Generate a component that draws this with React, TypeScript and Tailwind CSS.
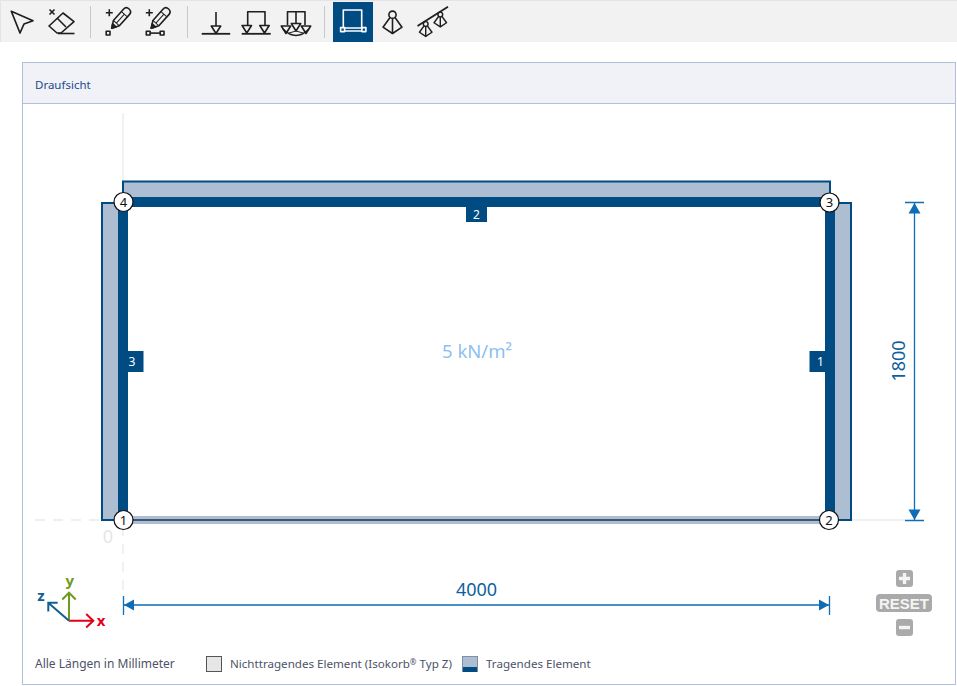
import React from "react";

const INK = "#1f1f1f";
const BLUE = "#004b82";
const SLAB = "#adbdd2";
const DIM = "#0f6cb5";
const GRID = "#ececec";

function Btn({ x, active, children }: { x: number; active?: boolean; children: React.ReactNode }) {
  return (
    <div className={active ? "w-10 h-10 shrink-0 bg-[#004b82]" : "w-10 h-10 shrink-0"}>
      <svg
        width={40}
        height={40}
        viewBox={`${x} 2 40 40`}
        fill="none"
        stroke={active ? "#ffffff" : INK}
        strokeWidth={1.6}
        strokeLinejoin="round"
      >
        {children}
      </svg>
    </div>
  );
}

function Pencil({ x, y }: { x: number; y: number }) {
  return (
    <g transform={`translate(${x} ${y}) rotate(-48)`}>
      <path d="M0 0 L7 -4 L22 -4 Q26 -4 26 0 Q26 4 22 4 L7 4 Z" />
      <path d="M0 0 L4 -2.3 L4 2.3 Z" fill={INK} />
      <path d="M7 -4 L7 4 M19 -4 L19 4 M7 0 L19 0" strokeWidth={1} />
    </g>
  );
}

function Plus({ x, y }: { x: number; y: number }) {
  return <path d={`M${x - 3.5} ${y} H${x + 3.5} M${x} ${y - 3.5} V${y + 3.5}`} strokeWidth={1.6} />;
}

function Tri({ x, y }: { x: number; y: number }) {
  return <path d={`M${x - 4.7} ${y} H${x + 4.7} L${x} ${y + 7.5} Z`} />;
}

function Support({ x, y, scale = 1, sw = 1.6 }: { x: number; y: number; scale?: number; sw?: number }) {
  return (
    <g transform={`translate(${x} ${y}) scale(${scale})`} strokeWidth={sw}>
      <circle cx={0} cy={0} r={3.6} />
      <path d="M-2.5 2.8 L-9.5 12.5 L0 18.8 L9.5 12.5 L2.5 2.8" />
      <path d="M0 3.6 V18.8" />
    </g>
  );
}

function Sep({ className }: { className: string }) {
  return <div className={`w-px h-8 mt-1 shrink-0 bg-[#c8c8c8] ${className}`} />;
}

function Toolbar() {
  return (
    <div className="h-[42px] flex items-start pl-px pt-px bg-[#f2f2f2] border-t border-l border-[#e4e4e4] box-border">
      <Btn x={2}>
        <path d="M11.3 11.3 L33 20.7 L24 24 L20 33 Z" strokeWidth={1.7} />
      </Btn>
      <Btn x={42}>
        <path d="M49.5 9.5 L54.5 14.5 M54.5 9.5 L49.5 14.5" strokeWidth={1.6} />
        <path d="M63 13 L74 21.6 L61 33 L57 33 L49 26 Z" />
        <path d="M57 18 L66 27" />
        <path d="M58 33.5 H74.5" />
      </Btn>
      <Sep className="ml-2 mr-[9px]" />
      <Btn x={100}>
        <Plus x={109.3} y={12.7} />
        <Pencil x={111.7} y={28.3} />
        <rect x={106.2} y={31.2} width={3.8} height={3.8} />
      </Btn>
      <Btn x={140}>
        <Plus x={149.3} y={12.7} />
        <Pencil x={151.2} y={28.3} />
        <rect x={146.3} y={31.2} width={3.8} height={3.8} />
        <rect x={160.2} y={31.2} width={3.8} height={3.8} />
        <path d="M150.1 33.1 H160.2" />
      </Btn>
      <Sep className="ml-[7px] mr-[7px]" />
      <Btn x={195}>
        <path d="M216 12 V26" />
        <Tri x={216} y={26} />
        <path d="M201.7 33.8 H230.2" strokeWidth={1.8} />
      </Btn>
      <Btn x={235}>
        <path d="M247.7 25 V11.7 H265 V25" />
        <Tri x={246.8} y={25.5} />
        <Tri x={264.5} y={25.5} />
        <path d="M241.7 33.8 H270.7" strokeWidth={1.8} />
      </Btn>
      <Btn x={275}>
        <path d="M287.5 25 V11.7 H305 V25 M296 11.7 V23" />
        <Tri x={286} y={26} />
        <Tri x={296} y={23.5} />
        <Tri x={306} y={26} />
        <path d="M283 29 Q296 42 309 29" />
        <path d="M289 33 L296 31 L303 33" strokeWidth={1} />
      </Btn>
      <Sep className="ml-[9px] mr-2" />
      <Btn x={333} active>
        <path d="M343.3 28 V10 H361.7 V28" />
        <path d="M344.5 28 H362 M344.5 31 H362" strokeWidth={1.3} />
        <rect x={340.6} y={27.6} width={4} height={4} />
        <rect x={361.9} y={27.6} width={4} height={4} />
      </Btn>
      <Btn x={373}>
        <Support x={392.5} y={14.7} />
      </Btn>
      <Btn x={413}>
        <path d="M417.5 26 L448 6.7" strokeWidth={1.8} />
        <Support x={425.7} y={24} scale={0.66} sw={2.2} />
        <Support x={440.3} y={14.5} scale={0.66} sw={2.2} />
      </Btn>
    </div>
  );
}

function NodeMark({ x, y, n }: { x: number; y: number; n: number }) {
  return (
    <g>
      <circle cx={x} cy={y} r={9.5} fill="#ffffff" stroke="#111111" strokeWidth={1.2} />
      <text x={x} y={y + 4.6} textAnchor="middle" fontSize={13} fill="#111111">
        {n}
      </text>
    </g>
  );
}

function Tag({ x, y, w, h, n, tx }: { x: number; y: number; w: number; h: number; n: number; tx: number }) {
  return (
    <g>
      <rect x={x} y={y} width={w} height={h} fill={BLUE} />
      <text x={tx} y={y + h / 2 + 4.5} textAnchor="middle" fontSize={12} fill="#ffffff">
        {n}
      </text>
    </g>
  );
}

function Drawing() {
  return (
    <svg width={932} height={540} viewBox="23 104 932 540" className="block shrink-0">
      <path d="M123 113 V181" stroke={GRID} strokeWidth={1.5} />
      <path d="M35 520 H101" stroke={GRID} strokeWidth={1.5} strokeDasharray="10 8" />
      <path d="M123 526 V590" stroke={GRID} strokeWidth={1.5} strokeDasharray="10 8" />
      <path d="M852 520 H905" stroke={GRID} strokeWidth={1.5} />
      <text x={108} y={543} textAnchor="middle" fontSize={18} fill="#e6e6e6">
        0
      </text>

      <rect x={123} y={181.5} width={707} height={20} fill={SLAB} stroke={BLUE} strokeWidth={2} />
      <rect x={102} y={203} width={20} height={317} fill={SLAB} stroke={BLUE} strokeWidth={2} />
      <rect x={831} y={203} width={20} height={317} fill={SLAB} stroke={BLUE} strokeWidth={2} />
      <rect x={123} y={516} width={707} height={8} fill={SLAB} />
      <rect x={123} y={519} width={707} height={2} fill="#3d5671" />
      <rect x={118} y={197} width={717} height={10} fill={BLUE} />
      <rect x={118} y={197} width={10} height={323} fill={BLUE} />
      <rect x={825} y={197} width={10} height={323} fill={BLUE} />

      <Tag x={466} y={206} w={21} h={16} n={2} tx={476.5} />
      <Tag x={125} y={351} w={18.5} h={21} n={3} tx={132} />
      <Tag x={809.5} y={351} w={18} h={21} n={1} tx={820.5} />

      <NodeMark x={123.5} y={202} n={4} />
      <NodeMark x={829.5} y={202.5} n={3} />
      <NodeMark x={123.5} y={520} n={1} />
      <NodeMark x={829} y={520} n={2} />

      <text x={477} y={358} textAnchor="middle" fontSize={18.5} fill="#8dbff0">
        5 kN/m²
      </text>

      <path d="M123.5 596 V615 M829.5 596 V615 M123.5 605 H829.5" stroke={DIM} strokeWidth={1.3} />
      <path d="M124 605 L134 599.5 V610.5 Z M829 605 L819 599.5 V610.5 Z" fill={DIM} />
      <text x={476.5} y={596} textAnchor="middle" fontSize={18} fill="#0f5f9f">
        4000
      </text>

      <path d="M905 202.5 H924 M905 520.5 H924 M914.5 202.5 V520.5" stroke={DIM} strokeWidth={1.3} />
      <path d="M914.5 203 L908.5 213.5 H920.5 Z M914.5 520 L908.5 509.5 H920.5 Z" fill={DIM} />
      <text
        x={905}
        y={361}
        textAnchor="middle"
        fontSize={18}
        fill="#0f5f9f"
        transform="rotate(-90 905 361)"
      >
        1800
      </text>

      <g fill="none" strokeWidth={2}>
        <path d="M69 620.7 H93 M86.2 614 L93.3 620.7 L86.2 627.5" stroke="#e2001a" />
        <path d="M69 620.7 V593 M62.3 599.5 L69 592.7 L75.7 599.5" stroke="#6f9a1e" />
        <path d="M69 620.7 L48.5 603 M48.3 611.5 L48.3 602.7 L57.7 602.7" stroke="#0f5f93" />
      </g>
      <g fontSize={15} fontWeight={700}>
        <text x={101} y={626} textAnchor="middle" fill="#e2001a">
          x
        </text>
        <text x={69.7} y={586} textAnchor="middle" fill="#6f9a1e">
          y
        </text>
        <text x={41} y={601} textAnchor="middle" fill="#0f5f93">
          z
        </text>
      </g>
    </svg>
  );
}

function ZoomControls() {
  return (
    <div className="absolute left-[853px] top-[466px] w-14 flex flex-col items-center gap-[7px] font-['Liberation_Sans',sans-serif] text-white">
      <div className="w-[17px] h-[17px] rounded-[3px] bg-[#aaaaaa] flex items-center justify-center">
        <svg width={15} height={15} viewBox="0 0 15 15">
          <path d="M7.5 2 V13 M2 7.5 H13" stroke="#f4f4f4" strokeWidth={3.4} />
        </svg>
      </div>
      <div className="w-14 h-[18px] rounded-[4px] bg-[#aaaaaa] flex items-center justify-center text-[15px] leading-none font-bold text-[#f4f4f4]">
        RESET
      </div>
      <div className="w-[17px] h-[17px] rounded-[3px] bg-[#aaaaaa] flex items-center justify-center">
        <svg width={15} height={15} viewBox="0 0 15 15">
          <path d="M2 7.5 H13" stroke="#f4f4f4" strokeWidth={3.4} />
        </svg>
      </div>
    </div>
  );
}

export default function App() {
  return (
    <div className="w-[957px] h-[686px] overflow-hidden bg-white font-['Noto_Sans',sans-serif]">
      <Toolbar />
      <div className="ml-[22px] mr-px mt-5 h-[623px] border border-[#b0c0d8] flex flex-col box-border">
        <div className="h-[41px] shrink-0 bg-[#f0f2f8] border-b border-[#b0c0d8] flex items-center pl-3 pt-1 text-[11.5px] text-[#1d4a8a] box-border">
          Draufsicht
        </div>
        <div className="relative flex-1 flex flex-col">
          <Drawing />
          <ZoomControls />
          <div className="flex-1 flex items-center pl-3 text-[11.6px] text-[#4d5368]">
            <span className="w-[171px] text-[12px]">Alle Längen in Millimeter</span>
            <span className="w-4 h-4 bg-[#e6e6e6] border border-[#555555] box-border" />
            <span className="ml-2 w-[232px]">
              Nichttragendes Element (Isokorb
              <span className="text-[8px] align-[3px]">®</span> Typ Z)
            </span>
            <span className="w-4 h-4 flex flex-col border-t border-x border-[#7d8fa8] box-border">
              <span className="flex-1 bg-[#adbdd2]" />
              <span className="h-[5px] bg-[#004b82]" />
            </span>
            <span className="ml-2">Tragendes Element</span>
          </div>
        </div>
      </div>
    </div>
  );
}
